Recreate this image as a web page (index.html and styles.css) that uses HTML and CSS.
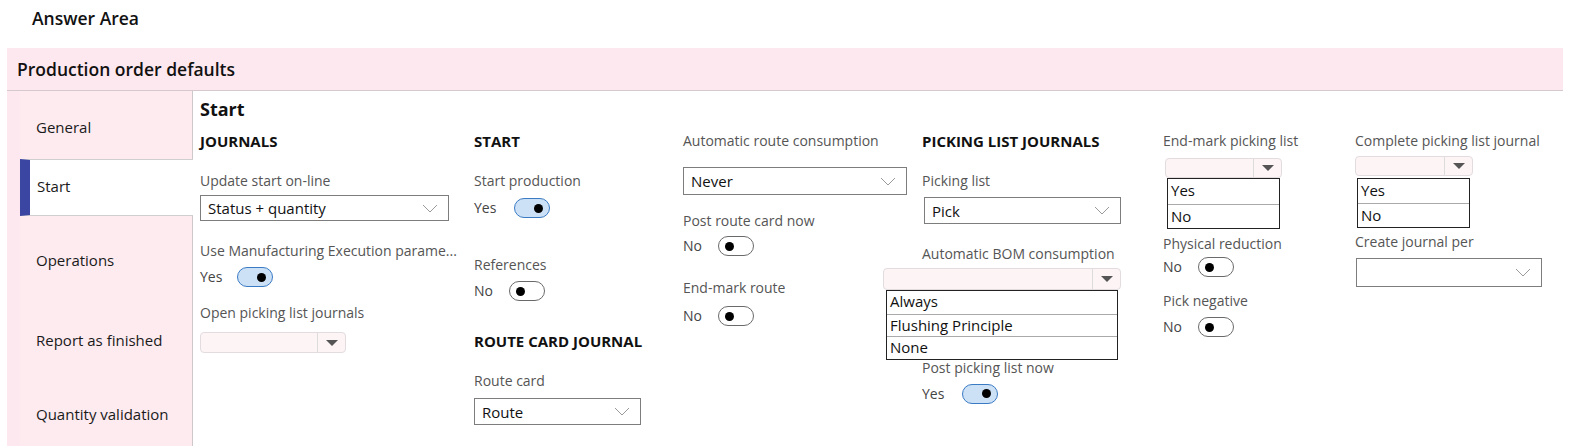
FILE: index.html
```html
<!DOCTYPE html>
<html lang="en">
<head>
<meta charset="utf-8">
<title>Production order defaults</title>
<link rel="stylesheet" href="styles.css">
</head>
<body>
<div class="answer-title">Answer Area</div>
<div class="panel">
  <div class="panel-header">Production order defaults</div>
  <div class="panel-body">
    <nav class="nav">
      <div class="nav-item nav-general">General</div>
      <div class="nav-item nav-start active">Start</div>
      <div class="nav-item nav-operations">Operations</div>
      <div class="nav-item nav-report">Report as finished</div>
      <div class="nav-item nav-quantity">Quantity validation</div>
    </nav>
    <main class="content">
      <h2 class="section-title">Start</h2>
      <div class="columns">
        <div class="col col1">
          <div class="group-title">JOURNALS</div>
          <div class="label c1-l1">Update start on-line</div>
          <div class="dropdown c1-dd"><span>Status + quantity</span><svg class="chev" viewBox="0 0 16 9"><path d="M1 1 L8 8 L15 1" fill="none" stroke="#9a9a9a" stroke-width="1"/></svg></div>
          <div class="label c1-l2">Use Manufacturing Execution parame...</div>
          <div class="toggle-row c1-t1"><span class="tval">Yes</span><span class="toggle on"><span class="knob"></span></span></div>
          <div class="label c1-l3">Open picking list journals</div>
          <div class="dd-disabled c1-dis"><span class="dd-arrow"><span class="tri"></span></span></div>
        </div>
        <div class="col col2">
          <div class="group-title">START</div>
          <div class="label c2-l1">Start production</div>
          <div class="toggle-row c2-t1"><span class="tval">Yes</span><span class="toggle on"><span class="knob"></span></span></div>
          <div class="label c2-l2">References</div>
          <div class="toggle-row c2-t2"><span class="tval">No</span><span class="toggle"><span class="knob"></span></span></div>
          <div class="group-title c2-g2">ROUTE CARD JOURNAL</div>
          <div class="label c2-l3">Route card</div>
          <div class="dropdown c2-dd"><span>Route</span><svg class="chev" viewBox="0 0 16 9"><path d="M1 1 L8 8 L15 1" fill="none" stroke="#9a9a9a" stroke-width="1"/></svg></div>
        </div>
        <div class="col col3">
          <div class="label">Automatic route consumption</div>
          <div class="dropdown c3-dd"><span>Never</span><svg class="chev" viewBox="0 0 16 9"><path d="M1 1 L8 8 L15 1" fill="none" stroke="#9a9a9a" stroke-width="1"/></svg></div>
          <div class="label c3-l2">Post route card now</div>
          <div class="toggle-row c3-t1"><span class="tval">No</span><span class="toggle"><span class="knob"></span></span></div>
          <div class="label c3-l3">End-mark route</div>
          <div class="toggle-row c3-t2"><span class="tval">No</span><span class="toggle"><span class="knob"></span></span></div>
        </div>
        <div class="col col4">
          <div class="group-title">PICKING LIST JOURNALS</div>
          <div class="label c4-l1">Picking list</div>
          <div class="dropdown c4-dd"><span>Pick</span><svg class="chev" viewBox="0 0 16 9"><path d="M1 1 L8 8 L15 1" fill="none" stroke="#9a9a9a" stroke-width="1"/></svg></div>
          <div class="label c4-l2">Automatic BOM consumption</div>
          <div class="dd-disabled c4-dis"><span class="dd-arrow"><span class="tri"></span></span></div>
          <ul class="listbox c4-list">
            <li>Always</li>
            <li>Flushing Principle</li>
            <li>None</li>
          </ul>
          <div class="label c4-l3">Post picking list now</div>
          <div class="toggle-row c4-t1"><span class="tval">Yes</span><span class="toggle on"><span class="knob"></span></span></div>
        </div>
        <div class="col col5">
          <div class="label">End-mark picking list</div>
          <div class="dd-disabled c5-dis"><span class="dd-arrow"><span class="tri"></span></span></div>
          <ul class="listbox c5-list">
            <li>Yes</li>
            <li>No</li>
          </ul>
          <div class="label c5-l2">Physical reduction</div>
          <div class="toggle-row c5-t1"><span class="tval">No</span><span class="toggle"><span class="knob"></span></span></div>
          <div class="label c5-l3">Pick negative</div>
          <div class="toggle-row c5-t2"><span class="tval">No</span><span class="toggle"><span class="knob"></span></span></div>
        </div>
        <div class="col col6">
          <div class="label">Complete picking list journal</div>
          <div class="dd-disabled c6-dis"><span class="dd-arrow"><span class="tri"></span></span></div>
          <ul class="listbox c6-list">
            <li>Yes</li>
            <li>No</li>
          </ul>
          <div class="label c6-l2">Create journal per</div>
          <div class="dropdown c6-dd"><span></span><svg class="chev" viewBox="0 0 16 9"><path d="M1 1 L8 8 L15 1" fill="none" stroke="#9a9a9a" stroke-width="1"/></svg></div>
        </div>
      </div>
    </main>
  </div>
</div>
</body>
</html>
```
FILE: styles.css
```css
* { box-sizing: border-box; }
html, body { margin: 0; padding: 0; background: #fff; }
body {
  width: 1570px;
  height: 446px;
  overflow: hidden;
  font-family: "Open Sans", "Noto Sans", sans-serif;
  color: #111;
}
.answer-title {
  height: 38px;
  padding: 7px 0 0 32px;
  font-size: 17.5px;
  font-weight: 600;
  line-height: 22px;
}
.panel {
  margin: 10px 0 0 7px;
  width: 1556px;
  height: 398px;
  background: #fde8ef;
  display: flex;
  flex-direction: column;
}
.panel-header {
  height: 43px;
  padding: 9px 0 0 10px;
  font-size: 17.5px;
  font-weight: 600;
  line-height: 24px;
  border-bottom: 1px solid #d5c9cd;
}
.panel-body {
  flex: 1;
  display: flex;
  min-height: 0;
}
.nav {
  width: 186px;
  padding-left: 13px;
  display: flex;
  flex-direction: column;
}
.nav-item {
  font-size: 15px;
  line-height: 20px;
  color: #1a1a1a;
  padding-left: 16px;
  border-right: 1px solid #cfc8ca;
  background: #fdebf0;
}
.nav-general { height: 68px; padding-top: 26px; }
.nav-start {
  height: 57px;
  padding-top: 16px;
  padding-left: 7px;
  background: #fff;
  border-right: none;
  border-top: 1px solid #cfcfcf;
  border-bottom: 1px solid #cfcfcf;
  border-left: 10px solid #3b46a3;
}
.nav-operations { height: 84px; padding-top: 34px; }
.nav-report { height: 76px; padding-top: 30px; }
.nav-quantity { flex: 1; padding-top: 28px; }

.content {
  flex: 1;
  background: #fff;
  padding: 6px 0 0 7px;
}
.section-title {
  margin: 0;
  font-size: 18px;
  font-weight: 700;
  line-height: 24px;
}
.columns {
  display: flex;
  margin-top: 10px;
}
.col { display: flex; flex-direction: column; align-items: flex-start; }
.col1 { width: 274px; }
.col2 { width: 209px; }
.col3 { width: 239px; }
.col4 { width: 241px; }
.col5 { width: 192px; }
.col6 { width: 200px; }

.group-title {
  font-size: 15px;
  font-weight: 700;
  line-height: 20px;
  color: #111;
  white-space: nowrap;
}
.label {
  font-size: 14px;
  line-height: 20px;
  color: #555;
  white-space: nowrap;
}
.dropdown {
  display: flex;
  align-items: center;
  justify-content: space-between;
  border: 1px solid #7d7d7d;
  background: #fff;
  padding: 0 10px 0 7px;
  font-size: 15px;
  color: #111;
}
.chev { width: 16px; height: 9px; display: block; }
.dd-disabled {
  display: flex;
  justify-content: flex-end;
  background: #fdf4f6;
  border: 1px solid #e2dcde;
  border-radius: 4px;
}
.dd-arrow {
  width: 28px;
  border-left: 1px solid #dcdcdc;
  display: flex;
  align-items: center;
  justify-content: center;
}
.tri {
  width: 0; height: 0;
  border-left: 6px solid transparent;
  border-right: 6px solid transparent;
  border-top: 6px solid #555;
}
.listbox {
  list-style: none;
  margin: 0;
  padding: 0;
  border: 1px solid #222;
  background: #fff;
}
.listbox li {
  font-size: 15px;
  color: #111;
  padding-left: 3px;
  border-top: 1px solid #aaa;
}
.listbox li:first-child { border-top: none; }
.toggle-row {
  display: flex;
  align-items: center;
  height: 20px;
  gap: 16px;
}
.tval { font-size: 14px; color: #444; line-height: 20px; }
.toggle {
  position: relative;
  width: 36px;
  height: 20px;
  border: 1.5px solid #6a6a6a;
  border-radius: 10px;
  background: #fff;
}
.toggle .knob {
  position: absolute;
  top: 4.5px;
  left: 6px;
  width: 9px;
  height: 9px;
  border-radius: 50%;
  background: #000;
}
.toggle.on {
  background: #cde1f6;
  border-color: #3a7bc4;
}
.toggle.on .knob { left: auto; right: 6px; }

/* column 1 */
.c1-l1 { margin-top: 20px; }
.c1-dd { margin-top: 4px; width: 249px; height: 26px; }
.c1-l2 { margin-top: 20px; }
.c1-t1 { margin-top: 6px; gap: 15px; }
.c1-l3 { margin-top: 16px; }
.c1-dis { margin-top: 9px; width: 146px; height: 21px; }

/* column 2 */
.c2-l1 { margin-top: 20px; }
.c2-t1 { margin-top: 7px; gap: 18px; }
.c2-l2 { margin-top: 37px; }
.c2-t2 { margin-top: 6px; }
.c2-g2 { margin-top: 30px; }
.c2-l3 { margin-top: 20px; }
.c2-dd { margin-top: 7px; width: 167px; height: 27px; }

/* column 3 */
.c3-dd { margin-top: 16px; width: 224px; height: 28px; }
.c3-l2 { margin-top: 16px; }
.c3-t1 { margin-top: 5px; }
.c3-l3 { margin-top: 22px; }
.c3-t2 { margin-top: 8px; }

/* column 4 */
.c4-l1 { margin-top: 20px; }
.c4-dd { margin-top: 6px; margin-left: 2px; width: 197px; height: 27px; }
.c4-l2 { margin-top: 20px; }
.c4-dis { margin-top: 4px; margin-left: -39px; width: 238px; height: 22px; }
.c4-list { margin-left: -36px; width: 232px; }
.c4-list li { height: 22.5px; line-height: 21px; }
.c4-l3 { margin-top: -2px; }
.c4-t1 { margin-top: 6px; gap: 18px; }

/* column 5 */
.c5-dis { margin-top: 7px; margin-left: 2px; width: 117px; height: 20px; }
.c5-list { margin-left: 4px; width: 113px; }
.c5-list li { height: 24.5px; line-height: 23px; }
.c5-l2 { margin-top: 5px; }
.c5-t1 { margin-top: 3px; }
.c5-l3 { margin-top: 14px; }
.c5-t2 { margin-top: 6px; }

/* column 6 */
.c6-dis { margin-top: 5px; width: 118px; height: 20px; }
.c6-list { margin-top: 2px; margin-left: 2px; width: 113px; }
.c6-list li { height: 24px; line-height: 23px; }
.c6-l2 { margin-top: 4px; }
.c6-dd { margin-top: 6px; margin-left: 1px; width: 186px; height: 29px; }
```
